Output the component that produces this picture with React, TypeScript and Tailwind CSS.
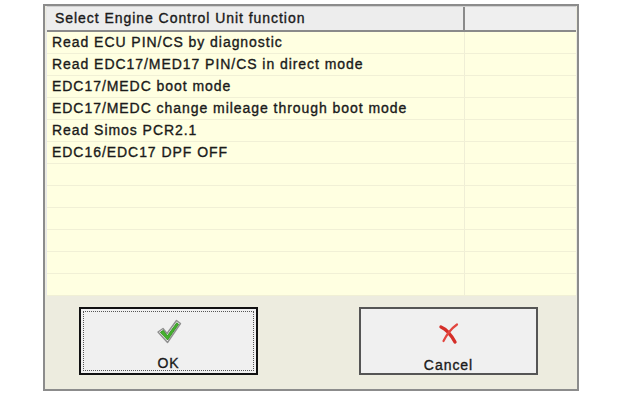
import React from "react";

const rows = [
  "Read ECU PIN/CS by diagnostic",
  "Read EDC17/MED17 PIN/CS in direct mode",
  "EDC17/MEDC boot mode",
  "EDC17/MEDC change mileage through boot mode",
  "Read Simos PCR2.1",
  "EDC16/EDC17 DPF OFF",
  "",
  "",
  "",
  "",
  "",
  "",
];

function Check() {
  return (
    <svg width="28" height="26" viewBox="0 0 26 25">
      <path
        d="M2 13 L7 9.5 L11 14.5 L20.5 1.5 L24.5 4.5 L11.5 23.5 Z"
        fill="#f6f6f6"
        stroke="#8f8f8f"
        strokeWidth="1.4"
        strokeLinejoin="round"
      />
      <path
        d="M4.3 13.3 L7.3 11.3 L11.3 16.8 L20.8 3.8 L22.6 5.2 L11.6 21 Z"
        fill="#44b22d"
        stroke="#2c8a1c"
        strokeWidth="0.8"
        strokeLinejoin="round"
      />
    </svg>
  );
}

function Cross() {
  return (
    <svg width="22" height="23" viewBox="0 0 22 23">
      <path
        d="M3 5 C8 7 12 11 17 20"
        fill="none"
        stroke="#d52f29"
        strokeWidth="3.4"
        strokeLinecap="round"
      />
      <path
        d="M19 2.5 C14 6 9 12 5.5 19"
        fill="none"
        stroke="#e2463f"
        strokeWidth="2.2"
        strokeLinecap="round"
      />
    </svg>
  );
}

const txt =
  "text-[14px] tracking-[0.95px] text-[#1a1a1a] [-webkit-text-stroke:0.35px_#1a1a1a] whitespace-nowrap";

export default function App() {
  return (
    <div
      className="w-[621px] h-[393px] bg-white overflow-hidden"
      style={{ fontFamily: '"Liberation Sans", Arial, sans-serif' }}
    >
      <div className="ml-[43px] mt-[4px] w-[536px] h-[387px] border-2 border-[#8c8c8c] bg-[#edecdf] flex flex-col">
        <div className="mx-[1px] mt-0 border-l border-[#e8e8e8] flex flex-col">
          <div className="h-[26px] flex bg-[#ededed] border-b-2 border-[#8a8a8a] border-t border-t-[#d0d0d0]">
            <div className={`w-[418px] border-r-2 border-[#8a8a8a] pl-[8px] flex items-center ${txt}`}>
              Select Engine Control Unit function
            </div>
            <div className="flex-1 bg-[#efefef]" />
          </div>
          {rows.map((r, i) => (
            <div
              key={i}
              className="h-[22px] flex bg-[#ffffe1] border-b border-[#f1f0d6]"
            >
              <div className={`w-[418px] border-r border-[#efeed6] pl-[5px] flex items-center ${txt}`}>
                {r}
              </div>
              <div className="flex-1" />
            </div>
          ))}
        </div>
        <div className="flex-1 flex items-start pt-[11px]">
          <div className="ml-[34px] w-[179px] h-[68px] border-2 border-[#111] bg-[#f0f0f0] p-[2px]">
            <div className="w-full h-full border border-dotted border-[#555] flex flex-col items-center pt-[7px]">
              <Check />
              <div className={`mt-[12px] leading-none ${txt}`}>OK</div>
            </div>
          </div>
          <div className="ml-[101px] w-[179px] h-[68px] border-2 border-[#555] bg-[#f0f0f0] flex flex-col items-center pt-[13px]">
            <Cross />
            <div className={`mt-[13px] leading-none ${txt}`}>Cancel</div>
          </div>
        </div>
      </div>
    </div>
  );
}
